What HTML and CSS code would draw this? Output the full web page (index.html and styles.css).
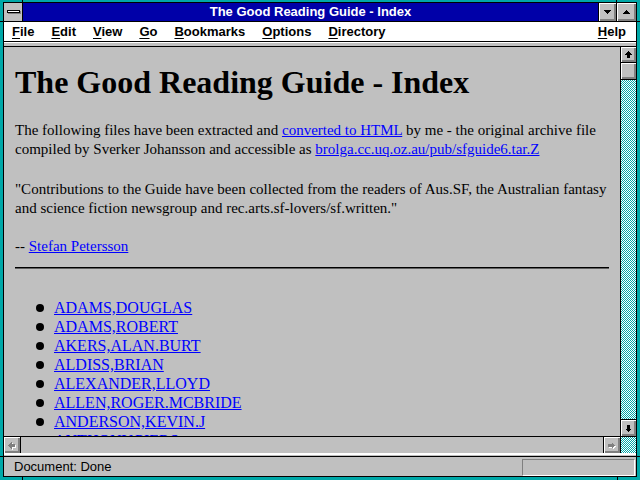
FILE: index.html
```html
<!DOCTYPE html>
<html>
<head>
<meta charset="utf-8">
<title>The Good Reading Guide - Index</title>
<link rel="stylesheet" href="styles.css">
</head>
<body>
<div class="window">
  <div class="frame">
    <div class="titlebar">
      <div class="sysmenu"><span class="sysbar"></span></div>
      <div class="title">The Good Reading Guide - Index</div>
      <div class="tbtn tmin"><svg width="7" height="4" viewBox="0 0 7 4"><path d="M0 0H7L3.5 4Z" fill="#000"/></svg></div>
      <div class="tbtn tmax"><svg width="7" height="4" viewBox="0 0 7 4"><path d="M0 4H7L3.5 0Z" fill="#000"/></svg></div>
    </div>
    <div class="menubar">
      <span class="mi"><u>F</u>ile</span>
      <span class="mi"><u>E</u>dit</span>
      <span class="mi"><u>V</u>iew</span>
      <span class="mi"><u>G</u>o</span>
      <span class="mi"><u>B</u>ookmarks</span>
      <span class="mi"><u>O</u>ptions</span>
      <span class="mi"><u>D</u>irectory</span>
      <span class="mi help"><u>H</u>elp</span>
    </div>
    <div class="strip"></div>
    <div class="main">
      <div class="content">
        <h1>The Good Reading Guide - Index</h1>
        <p>The following files have been extracted and <a href="#">converted to HTML</a> by me - the original archive file compiled by Sverker Johansson and accessible as <a href="#">brolga.cc.uq.oz.au/pub/sfguide6.tar.Z</a></p>
        <p class="quote">"Contributions to the Guide have been collected from the readers of Aus.SF, the Australian fantasy and science fiction newsgroup and rec.arts.sf-lovers/sf.written."</p>
        <p class="sig">-- <a href="#">Stefan Petersson</a></p>
        <hr>
        <ul class="authors">
          <li><a href="#">ADAMS,DOUGLAS</a></li>
          <li><a href="#">ADAMS,ROBERT</a></li>
          <li><a href="#">AKERS,ALAN.BURT</a></li>
          <li><a href="#">ALDISS,BRIAN</a></li>
          <li><a href="#">ALEXANDER,LLOYD</a></li>
          <li><a href="#">ALLEN,ROGER.MCBRIDE</a></li>
          <li><a href="#">ANDERSON,KEVIN.J</a></li>
          <li><a href="#">ANTHONY,PIERS</a></li>
        </ul>
      </div>
      <div class="vscroll">
        <div class="sbtn vup"><svg width="7" height="7" viewBox="0 0 7 7"><path d="M3.5 0L7 3.5H5V7H2V3.5H0Z" fill="#000"/></svg></div>
        <div class="thumb"></div>
        <div class="track"></div>
        <div class="sbtn vdown"><svg width="7" height="7" viewBox="0 0 7 7"><path d="M3.5 7L7 3.5H5V0H2V3.5H0Z" fill="#000"/></svg></div>
      </div>
    </div>
    <div class="hscroll">
      <div class="sbtn hleft"><svg width="9" height="9" viewBox="0 0 9 9"><path d="M1 5.5L4.5 9V7H8V4H4.5V2Z" fill="#fff"/><path d="M0 4.5L3.5 1V3H7V6H3.5V8Z" fill="#808080"/></svg></div>
      <div class="htrack"></div>
      <div class="sbtn hright"><svg width="9" height="9" viewBox="0 0 9 9"><path d="M8 5.5L4.5 9V7H1V4H4.5V2Z" fill="#fff"/><path d="M7 4.5L3.5 1V3H0V6H3.5V8Z" fill="#808080"/></svg></div>
      <div class="corner"></div>
    </div>
    <div class="strip2"></div>
    <div class="status">
      <span class="stext">Document: Done</span>
      <div class="statbox"></div>
    </div>
  </div>
  <div class="notch nt1"></div>
  <div class="notch nt2"></div>
  <div class="notch nb1"></div>
  <div class="notch nb2"></div>
  <div class="notch nl1"></div>
  <div class="notch nl2"></div>
  <div class="notch nr1"></div>
  <div class="notch nr2"></div>
</div>
</body>
</html>
```
FILE: styles.css
```css
html, body {
  margin: 0;
  padding: 0;
  background: #c0c0c0;
}

.window {
  position: relative;
  width: 640px;
  height: 480px;
  box-sizing: border-box;
  padding: 2px 3px 3px 3px;
  background: #00a8a8;
  overflow: hidden;
}

.frame {
  height: 100%;
  box-sizing: border-box;
  border: 1px solid #000;
  display: flex;
  flex-direction: column;
  background: #c0c0c0;
}

/* title bar */
.titlebar {
  flex: none;
  height: 18px;
  border-bottom: 1px solid #000;
  display: flex;
  background: #0000a8;
}

.sysmenu {
  width: 18px;
  border-right: 1px solid #000;
  background: #c0c0c0;
  display: flex;
  align-items: center;
  justify-content: center;
}

.sysbar {
  display: block;
  width: 11px;
  height: 1px;
  background: #fff;
  border: 1px solid #000;
  box-shadow: 1px 1px 0 #808080;
  margin-top: -1px;
}

.title {
  flex: 1;
  color: #fff;
  font-family: "Liberation Sans", Arial, sans-serif;
  font-weight: bold;
  font-size: 13px;
  line-height: 18px;
  text-align: center;
  white-space: nowrap;
}

.tbtn {
  border-left: 1px solid #000;
  background: #c0c0c0;
  display: flex;
  align-items: center;
  justify-content: center;
  box-shadow: inset 1px 1px 0 #fff, inset -1px -1px 0 #808080, inset -2px -2px 0 #808080;
}

.tmin { width: 17px; }
.tmax { width: 19px; }

.tbtn svg, .sbtn svg { display: block; shape-rendering: crispEdges; }

/* menu bar */
.menubar {
  flex: none;
  height: 19px;
  border-bottom: 1px solid #000;
  background: #fff;
  display: flex;
  gap: 17px;
  padding-left: 8px;
  padding-right: 10px;
  font-family: "Liberation Sans", Arial, sans-serif;
  font-weight: bold;
  font-size: 13px;
  line-height: 19px;
  color: #000;
}

.mi u { text-decoration: underline; text-underline-offset: 2px; }

.help { margin-left: auto; }

.strip {
  flex: none;
  height: 3px;
  border-top: 1px solid #fff;
  border-bottom: 1px solid #000;
  background: #c0c0c0;
}

/* main area */
.main {
  flex: 1;
  min-height: 0;
  display: flex;
}

.content {
  flex: 1;
  min-width: 0;
  overflow: hidden;
  padding: 0 11px;
  font-family: "Liberation Serif", "Times New Roman", serif;
  color: #000;
}

.content a { color: #0000ff; text-decoration: underline; }

h1 {
  margin: 17px 0 0;
  font-size: 32px;
  line-height: 37px;
  font-weight: bold;
  white-space: nowrap;
}

p {
  margin: 20px 0 0;
  font-size: 15px;
  line-height: 19px;
}

p.quote { margin-top: 21px; }
p.sig { margin-top: 19px; }

hr {
  margin: 11px 0 0;
  height: 0;
  border: 0;
  border-top: 1px solid #000;
  border-bottom: 1px solid #606060;
}

.authors {
  list-style: none;
  margin: 29px 0 0;
  padding: 0 0 0 21px;
  font-size: 16px;
  line-height: 19px;
}

.authors li::before {
  content: "";
  display: inline-block;
  width: 8px;
  height: 8px;
  border-radius: 50%;
  background: #000;
  margin-right: 10px;
  vertical-align: 1px;
}

/* scrollbars */
.sbtn {
  background: #c0c0c0;
  display: flex;
  align-items: center;
  justify-content: center;
  box-shadow: inset 1px 1px 0 #fff, inset -1px -1px 0 #808080, inset -2px -2px 0 #808080;
}

.vscroll {
  flex: none;
  width: 15px;
  border-left: 1px solid #000;
  display: flex;
  flex-direction: column;
}

.vup { height: 15px; border-bottom: 1px solid #000; }

.thumb {
  height: 16px;
  border-bottom: 1px solid #000;
  background: #c0c0c0;
  box-shadow: inset 1px 1px 0 #fff, inset -1px -1px 0 #808080, inset -2px -2px 0 #808080;
}

.track, .corner {
  background: repeating-conic-gradient(#00a8a8 0 25%, #fff 0 50%) 0 0 / 2px 2px;
}

.track { flex: 1; }

.vdown { height: 16px; border-top: 1px solid #000; }

.hscroll {
  flex: none;
  height: 16px;
  border-top: 1px solid #000;
  display: flex;
}

.hleft { width: 16px; border-right: 1px solid #000; }
.htrack { flex: 1; background: #c0c0c0; }
.hright { width: 16px; border-left: 1px solid #000; }
.corner { width: 15px; border-left: 1px solid #000; }

.strip2 {
  flex: none;
  height: 1px;
  border-top: 2px solid #fff;
  border-bottom: 1px solid #000;
  background: #c0c0c0;
}

/* status bar */
.status {
  flex: none;
  height: 19px;
  display: flex;
  align-items: center;
  padding-left: 10px;
  font-family: "Liberation Sans", Arial, sans-serif;
  font-size: 13px;
  color: #000;
}

.statbox {
  margin-left: auto;
  margin-right: 1px;
  align-self: flex-end;
  width: 111px;
  height: 15px;
  border-top: 1px solid #808080;
  border-left: 1px solid #808080;
  border-bottom: 1px solid #fff;
  border-right: 1px solid #fff;
}

/* frame resize notches */
.notch { position: absolute; background: #000; }
.nt1 { left: 22px; top: 0; width: 1px; height: 2px; }
.nt2 { left: 616px; top: 0; width: 1px; height: 2px; }
.nb1 { left: 22px; top: 477px; width: 1px; height: 3px; }
.nb2 { left: 617px; top: 477px; width: 1px; height: 3px; }
.nl1 { left: 0; top: 21px; width: 3px; height: 1px; }
.nl2 { left: 0; top: 456px; width: 3px; height: 1px; }
.nr1 { left: 637px; top: 21px; width: 3px; height: 1px; }
.nr2 { left: 637px; top: 456px; width: 3px; height: 1px; }
```
